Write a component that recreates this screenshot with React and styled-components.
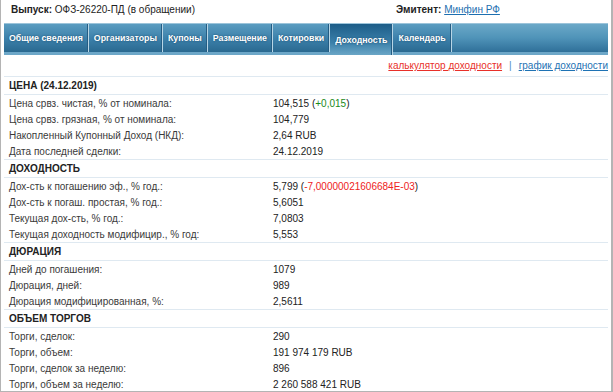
import React from 'react';
import styled, { createGlobalStyle } from 'styled-components';

const Global = createGlobalStyle`
  body { margin: 0; background: #fff; font-family: "Liberation Sans", Arial, sans-serif; }
`;

const tabs = ['Общие сведения', 'Организаторы', 'Купоны', 'Размещение', 'Котировки', 'Доходность', 'Календарь'];

const sections = [
  {
    title: 'ЦЕНА (24.12.2019)',
    rows: [
      ['Цена срвз. чистая, % от номинала:', '104,515', { text: '+0,015', color: '#1a8a1a' }],
      ['Цена срвз. грязная, % от номинала:', '104,779'],
      ['Накопленный Купонный Доход (НКД):', '2,64 RUB'],
      ['Дата последней сделки:', '24.12.2019'],
    ],
  },
  {
    title: 'ДОХОДНОСТЬ',
    rows: [
      ['Дох-сть к погашению эф., % год.:', '5,799', { text: '-7,00000021606684E-03', color: '#ee2222' }],
      ['Дох-сть к погаш. простая, % год.:', '5,6051'],
      ['Текущая дох-сть, % год.:', '7,0803'],
      ['Текущая доходность модифицир., % год:', '5,553'],
    ],
  },
  {
    title: 'ДЮРАЦИЯ',
    rows: [
      ['Дней до погашения:', '1079'],
      ['Дюрация, дней:', '989'],
      ['Дюрация модифицированная, %:', '2,5611'],
    ],
  },
  {
    title: 'ОБЪЕМ ТОРГОВ',
    rows: [
      ['Торги, сделок:', '290'],
      ['Торги, объем:', '191 974 179 RUB'],
      ['Торги, сделок за неделю:', '896'],
      ['Торги, объем за неделю:', '2 260 588 421 RUB'],
    ],
  },
];

const Page = styled.div`
  width: 613px;
  height: 392px;
  box-sizing: border-box;
  border: 1px solid #b4b4b4;
  border-top: none;
  border-right-width: 2px;
  overflow: hidden;
  padding: 0 3px 0 3px;
`;

const TopLine = styled.div`
  display: flex;
  height: 18px;
  align-items: center;
  font-size: 10px;
  color: #222;
  padding-left: 7px;
`;

const Issue = styled.div`
  width: 385px;
  b { font-weight: bold; }
`;

const Issuer = styled.div`
  a { color: #1d6fb0; text-decoration: underline; }
`;

const TabBar = styled.div`
  margin-top: 5px;
  height: 28px;
  display: flex;
  background: linear-gradient(#6aa6c6, #3f84ad 60%, #2d6d96);
  border-top: 1px solid #9cc4da;
  border-bottom: 3px solid #6da7c8;
  box-shadow: 0 -1px 0 #2b6a93 inset;
`;

const Tab = styled.div`
  padding: 0 5px;
  display: flex;
  align-items: center;
  font-size: 8.8px;
  font-weight: bold;
  color: #fff;
  text-shadow: 0 0 2px #1a4a6a;
  border-right: 1px solid #b8d6e6;
  box-shadow: inset -1px 0 0 #245d84;
  background: ${p => (p.active ? 'linear-gradient(#1d5d88, #3b80aa 60%, #6aa6c6)' : 'linear-gradient(#5a9cc0, #3b7fa9 55%, #2a6990)')};
  margin-bottom: ${p => (p.active ? '-3px' : '0')};
`;

const TabFill = styled.div`
  flex: 1;
  background: linear-gradient(#6ba8c8, #4f93b8 50%, #2f7099);
`;

const Links = styled.div`
  height: 21px;
  display: flex;
  justify-content: flex-end;
  align-items: center;
  gap: 7px;
  font-size: 10px;
  border-bottom: 1px solid #dfe9f1;
  a { text-decoration: underline; }
`;

const LinkRed = styled.a`
  color: #e8302a;
`;

const LinkBlue = styled.a`
  color: #1e72b4;
`;

const Sep = styled.span`
  color: #4c8ec0;
`;

const Section = styled.div`
  border-bottom: 1px solid #dfe9f1;
`;

const Head = styled.div`
  height: 17px;
  display: flex;
  align-items: center;
  padding-left: 5px;
  font-size: 10px;
  font-weight: bold;
  color: #222;
  border-bottom: 1px solid #dfe9f1;
`;

const Row = styled.div`
  height: 16px;
  display: flex;
  align-items: center;
  font-size: 10px;
`;

const Label = styled.div`
  width: 269px;
  padding-left: 5px;
  box-sizing: border-box;
  color: #3a3a3a;
`;

const Value = styled.div`
  color: #222;
  white-space: nowrap;
`;

const Delta = styled.span`
  color: ${p => p.color};
`;

export default function App() {
  return (
    <Page>
      <Global />
      <TopLine>
        <Issue><b>Выпуск:</b> ОФЗ-26220-ПД (в обращении)</Issue>
        <Issuer><b>Эмитент:</b> <a href="#">Минфин РФ</a></Issuer>
      </TopLine>
      <TabBar>
        {tabs.map(t => (
          <Tab key={t} active={t === 'Доходность'}>{t}</Tab>
        ))}
        <TabFill />
      </TabBar>
      <Links>
        <LinkRed href="#">калькулятор доходности</LinkRed>
        <Sep>|</Sep>
        <LinkBlue href="#">график доходности</LinkBlue>
      </Links>
      {sections.map(s => (
        <Section key={s.title}>
          <Head>{s.title}</Head>
          {s.rows.map(([l, v, d]) => (
            <Row key={l}>
              <Label>{l}</Label>
              <Value>
                {v}
                {d && <> (<Delta color={d.color}>{d.text}</Delta>)</>}
              </Value>
            </Row>
          ))}
        </Section>
      ))}
    </Page>
  );
}
